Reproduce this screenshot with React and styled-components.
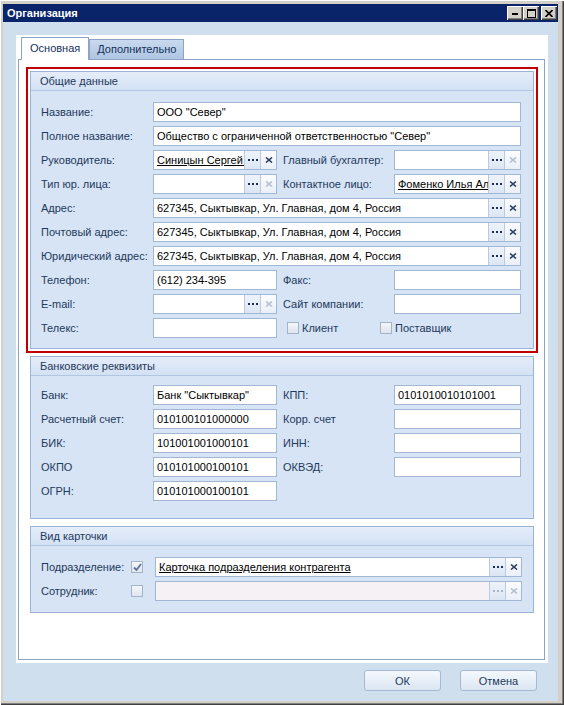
import React from 'react';
import styled, { createGlobalStyle, css } from 'styled-components';

const GlobalStyle = createGlobalStyle`
  html, body {
    margin: 0;
    padding: 0;
    background: #d4d0c8;
  }
  body {
    font-family: "Liberation Sans", Arial, sans-serif;
    font-size: 11px;
  }
  * { box-sizing: border-box; }
`;

const mainRows = [
  { label: 'Название:', wide: { text: 'ООО "Север"' } },
  { label: 'Полное название:', wide: { text: 'Общество с ограниченной ответственностью "Север"' } },
  {
    label: 'Руководитель:',
    left: { text: 'Синицын Сергей Петрович', link: true, lookup: true },
    label2: 'Главный бухгалтер:',
    right: { lookup: true },
  },
  {
    label: 'Тип юр. лица:',
    left: { lookup: true },
    label2: 'Контактное лицо:',
    right: { text: 'Фоменко Илья Алексеевич', link: true, lookup: true },
  },
  { label: 'Адрес:', wide: { text: '627345, Сыктывкар, Ул. Главная, дом 4, Россия', lookup: true } },
  { label: 'Почтовый адрес:', wide: { text: '627345, Сыктывкар, Ул. Главная, дом 4, Россия', lookup: true } },
  { label: 'Юридический адрес:', wide: { text: '627345, Сыктывкар, Ул. Главная, дом 4, Россия', lookup: true } },
  { label: 'Телефон:', left: { text: '(612) 234-395' }, label2: 'Факс:', right: {} },
  { label: 'E-mail:', left: { lookup: true }, label2: 'Сайт компании:', right: {} },
];

const bankRows = [
  { label: 'Банк:', left: { text: 'Банк "Сыктывкар"' }, label2: 'КПП:', right: { text: '0101010010101001' } },
  { label: 'Расчетный счет:', left: { text: '010100101000000' }, label2: 'Корр. счет', right: {} },
  { label: 'БИК:', left: { text: '101001001000101' }, label2: 'ИНН:', right: {} },
  { label: 'ОКПО', left: { text: '010101000100101' }, label2: 'ОКВЭД:', right: {} },
  { label: 'ОГРН:', left: { text: '010101000100101' } },
];

function Dots({ off }) {
  const c = off ? '#a9b6ca' : '#1c2f55';
  return (
    <svg width="10" height="3" viewBox="0 0 10 3">
      <rect x="0" y="0" width="2" height="2" fill={c} />
      <rect x="4" y="0" width="2" height="2" fill={c} />
      <rect x="8" y="0" width="2" height="2" fill={c} />
    </svg>
  );
}

function Cross({ off }) {
  const c = off ? '#b4bfd0' : '#2c3f62';
  return (
    <svg width="8" height="6" viewBox="0 0 8 6">
      <path d="M1 0.5 L7 5.5 M7 0.5 L1 5.5" stroke={c} strokeWidth="1.6" fill="none" />
    </svg>
  );
}

function Field({ text, link, lookup, disabled, span }) {
  const empty = !text;
  return (
    <Box $span={span} $disabled={disabled}>
      <BoxText $link={link}>{text}</BoxText>
      {lookup && (
        <>
          <EditButton $shade>
            <Dots off={disabled} />
          </EditButton>
          <EditButton>
            <Cross off={disabled || empty} />
          </EditButton>
        </>
      )}
    </Box>
  );
}

function Check({ checked, label }) {
  return (
    <CheckItem>
      <CheckBox>
        {checked && (
          <svg width="9" height="9" viewBox="0 0 9 9">
            <path d="M1 4.5 L3.5 7 L8 1" stroke="#5d7299" strokeWidth="1.8" fill="none" />
          </svg>
        )}
      </CheckBox>
      {label && <CheckLabel>{label}</CheckLabel>}
    </CheckItem>
  );
}

function PairRows({ rows }) {
  return rows.map((r) => (
    <React.Fragment key={r.label}>
      <Label>{r.label}</Label>
      {r.wide ? (
        <Field {...r.wide} span={3} />
      ) : (
        <>
          <Field {...r.left} />
          {r.label2 ? <Label $indent>{r.label2}</Label> : <span />}
          {r.right ? <Field {...r.right} /> : <span />}
        </>
      )}
    </React.Fragment>
  ));
}

export default function App() {
  return (
    <>
      <GlobalStyle />
      <Window>
        <TitleBar>
          <Title>Организация</Title>
          <TitleButton>
            <svg width="6" height="2"><rect width="6" height="2" fill="#000" /></svg>
          </TitleButton>
          <TitleButton>
            <svg width="9" height="9" viewBox="0 0 9 9">
              <rect x="0.5" y="0.5" width="8" height="8" stroke="#000" fill="none" />
              <rect x="0" y="0" width="9" height="2" fill="#000" />
            </svg>
          </TitleButton>
          <TitleButton $gap>
            <svg width="8" height="7" viewBox="0 0 8 7">
              <path d="M0.5 0 L7.5 7 M7.5 0 L0.5 7" stroke="#000" strokeWidth="1.6" />
            </svg>
          </TitleButton>
        </TitleBar>

        <Body>
          <Sheet>
            <TabStrip>
              <Tab $active>Основная</Tab>
              <Tab>Дополнительно</Tab>
            </TabStrip>
            <TabPanel>
              <Group $selected>
                <GroupTitle>Общие данные</GroupTitle>
                <FieldGrid $pad="11px 11px 10px 10px">
                  <PairRows rows={mainRows} />
                  <Label>Телекс:</Label>
                  <Field />
                  <Checks>
                    <Check label="Клиент" />
                    <Check label="Поставщик" />
                  </Checks>
                </FieldGrid>
              </Group>

              <Group>
                <GroupTitle>Банковские реквизиты</GroupTitle>
                <FieldGrid $pad="9px 11px 17px 10px">
                  <PairRows rows={bankRows} />
                </FieldGrid>
              </Group>

              <Group>
                <GroupTitle>Вид карточки</GroupTitle>
                <FieldGrid $cols="90px 24px 1fr" $pad="11px 11px 11px 10px">
                  <Label>Подразделение:</Label>
                  <Check checked />
                  <Field text="Карточка подразделения контрагента" link lookup />
                  <Label>Сотрудник:</Label>
                  <Check />
                  <Field lookup disabled />
                </FieldGrid>
              </Group>
            </TabPanel>
          </Sheet>
          <ButtonRow>
            <DialogButton>ОК</DialogButton>
            <DialogButton>Отмена</DialogButton>
          </ButtonRow>
        </Body>
      </Window>
    </>
  );
}

const Window = styled.div`
  width: 564px;
  height: 705px;
  display: flex;
  flex-direction: column;
  padding: 4px 6px 4px 3px;
  background: #d4d0c8;
  box-shadow: inset 1px 1px 0 #ffffff, inset -1px -1px 0 #404040, inset -2px -2px 0 #808080;
`;

const TitleBar = styled.div`
  height: 18px;
  display: flex;
  align-items: center;
  padding: 0 1px 0 4px;
  background: #0a246a;
`;

const Title = styled.div`
  flex: 1;
  color: #fff;
  font-weight: bold;
  font-size: 11px;
`;

const TitleButton = styled.div`
  width: 16px;
  height: 14px;
  display: flex;
  align-items: center;
  justify-content: center;
  margin-left: ${(p) => (p.$gap ? '2px' : '0')};
  background: #d4d0c8;
  box-shadow: inset 1px 1px 0 #fff, inset -1px -1px 0 #404040, inset -2px -2px 0 #808080;
  svg { margin-top: 1px; }
`;

const Body = styled.div`
  flex: 1;
  display: flex;
  flex-direction: column;
  padding: 13px 10px 0 13px;
  background: #cfdfee;
`;

const Sheet = styled.div`
  flex: 1;
  display: flex;
  flex-direction: column;
  padding: 2px 3px 3px 2px;
  background: #fff;
`;

const TabStrip = styled.div`
  height: 22px;
  display: flex;
  align-items: flex-end;
  padding-left: 3px;
`;

const Tab = styled.div`
  height: 20px;
  padding: 0 7px;
  line-height: 19px;
  color: #15305a;
  border: 1px solid #8ea4c4;
  border-bottom: none;
  background: linear-gradient(#c9d9ee, #aec5e3);
  ${(p) =>
    p.$active &&
    css`
      height: 23px;
      margin-bottom: -1px;
      padding: 0 8px;
      line-height: 21px;
      background: #fff;
      position: relative;
      z-index: 1;
    `}
`;

const TabPanel = styled.div`
  flex: 1;
  display: flex;
  flex-direction: column;
  gap: 7px;
  padding: 11px 10px 0 11px;
  border: 1px solid #8ea4c4;
`;

const Group = styled.div`
  border: 1px solid #9bb3d7;
  background: #d7e4f5;
  ${(p) =>
    p.$selected &&
    css`
      outline: 2px solid #c00000;
      outline-offset: 2px;
    `}
`;

const GroupTitle = styled.div`
  height: 19px;
  line-height: 18px;
  padding-left: 9px;
  color: #1e395b;
  background: linear-gradient(#e5edf9, #d3e1f4);
  border-bottom: 1px solid #b1c6e3;
`;

const FieldGrid = styled.div`
  display: grid;
  grid-template-columns: ${(p) => p.$cols || '112px 124px 117px 127px'};
  grid-auto-rows: 20px;
  row-gap: 4px;
  align-items: center;
  padding: ${(p) => p.$pad};
`;

const Label = styled.div`
  color: #1e395b;
  white-space: nowrap;
  padding-left: ${(p) => (p.$indent ? '6px' : '0')};
`;

const Box = styled.div`
  grid-column: span ${(p) => p.$span || 1};
  height: 20px;
  display: flex;
  border: 1px solid #a2b7d4;
  background: ${(p) => (p.$disabled ? '#f5f1f5' : '#fff')};
`;

const BoxText = styled.div`
  flex: 1;
  min-width: 0;
  padding: 0 3px;
  line-height: 18px;
  color: #000;
  white-space: nowrap;
  overflow: hidden;
  text-decoration: ${(p) => (p.$link ? 'underline' : 'none')};
`;

const EditButton = styled.div`
  width: 16px;
  flex: none;
  display: flex;
  align-items: center;
  justify-content: center;
  border-left: 1px solid #bccadf;
  background: ${(p) => (p.$shade ? 'linear-gradient(#eef3fa, #dce6f4)' : 'linear-gradient(#fbfcfe, #eaf0f8)')};
`;

const Checks = styled.div`
  grid-column: span 2;
  display: flex;
  align-items: center;
  padding-left: 10px;
`;

const CheckItem = styled.div`
  display: flex;
  align-items: center;
  &:not(:last-child) { width: 93px; }
`;

const CheckBox = styled.div`
  width: 12px;
  height: 12px;
  flex: none;
  display: flex;
  align-items: center;
  justify-content: center;
  border: 1px solid #a3b3ca;
  background: linear-gradient(#f4f6f9, #dfe5ed);
`;

const CheckLabel = styled.span`
  margin-left: 3px;
  color: #1e395b;
`;

const ButtonRow = styled.div`
  display: flex;
  justify-content: flex-end;
  gap: 19px;
  padding: 7px 11px 10px 0;
`;

const DialogButton = styled.div`
  width: 77px;
  height: 21px;
  display: flex;
  align-items: center;
  justify-content: center;
  color: #1e395b;
  border: 1px solid #a6b8d2;
  border-radius: 3px;
  background: linear-gradient(#f4f8fc, #dbe6f3);
`;
